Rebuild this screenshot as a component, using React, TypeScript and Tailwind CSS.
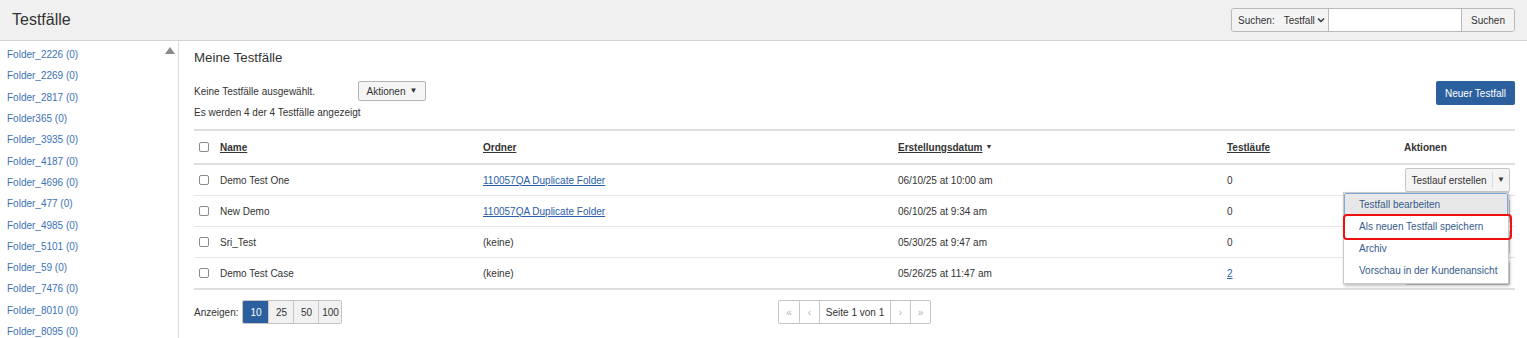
import React from "react";

const folders = [
  "Folder_2226 (0)",
  "Folder_2269 (0)",
  "Folder_2817 (0)",
  "Folder365 (0)",
  "Folder_3935 (0)",
  "Folder_4187 (0)",
  "Folder_4696 (0)",
  "Folder_477 (0)",
  "Folder_4985 (0)",
  "Folder_5101 (0)",
  "Folder_59 (0)",
  "Folder_7476 (0)",
  "Folder_8010 (0)",
  "Folder_8095 (0)",
];

type Row = { name: string; folder: string | null; date: string; runs: string; runsLink?: boolean };

const rows: Row[] = [
  { name: "Demo Test One", folder: "110057QA Duplicate Folder", date: "06/10/25 at 10:00 am", runs: "0" },
  { name: "New Demo", folder: "110057QA Duplicate Folder", date: "06/10/25 at 9:34 am", runs: "0" },
  { name: "Sri_Test", folder: null, date: "05/30/25 at 9:47 am", runs: "0" },
  { name: "Demo Test Case", folder: null, date: "05/26/25 at 11:47 am", runs: "2", runsLink: true },
];

function Checkbox() {
  return <span className="block w-[10px] h-[10px] border border-[#8a8a8a] rounded-[2px] bg-white" />;
}

function SplitButton() {
  return (
    <div className="flex h-[24px] w-[105px] border border-[#c6c6c6] rounded-[2px] bg-[#f4f4f4] text-[#333]">
      <div className="flex-1 flex items-center justify-center">Testlauf erstellen</div>
      <div className="w-[17px] flex items-center justify-center border-l border-[#dcdcdc] text-[8px] my-[3px]">▼</div>
    </div>
  );
}

function Menu() {
  return (
    <div className="absolute left-[-55px] top-[24px] w-[166px] h-[92px] bg-white border border-[#c9c9c9] shadow-[1px_2px_3px_rgba(0,0,0,0.25)] z-10 text-[#355b8c]">
      <div className="h-[22px] flex items-center pl-[14px] bg-[#e8e8e8] border border-[#7ea8d8] rounded-t-[2px]">Testfall bearbeiten</div>
      <div className="h-[22px] flex items-center pl-[15px]">Als neuen Testfall speichern</div>
      <div className="h-[22px] flex items-center pl-[15px]">Archiv</div>
      <div className="h-[22px] flex items-center pl-[15px]">Vorschau in der Kundenansicht</div>
      <div className="absolute left-[-1px] right-[-4px] top-[21px] h-[26px] border-2 border-[#ee1111] rounded-[4px]" />
    </div>
  );
}

export default function App() {
  return (
    <div className="w-[1527px] h-[338px] overflow-hidden bg-white flex flex-col font-['Liberation_Sans',Arial,sans-serif] text-[10px] text-[#333]">
      {/* Header */}
      <div className="h-[41px] shrink-0 bg-[#f0f0f0] border-b border-[#d4d4d4] flex items-center justify-between pl-[12px] pr-[12px]">
        <div className="text-[16px] text-[#333] leading-none">Testfälle</div>
        <div className="flex h-[24px] border border-[#b9b9b9] rounded-[3px] overflow-hidden">
          <div className="w-[96px] bg-[#f3f3f3] flex items-center pl-[6px] text-[#333]">
            <span>Suchen:</span>
            <span className="ml-[9px]">Testfall</span>
            <svg width="8" height="6" viewBox="0 0 8 6" className="ml-[2px]">
              <path d="M1 1.5 L4 4.5 L7 1.5" stroke="#333" strokeWidth="1.4" fill="none" />
            </svg>
          </div>
          <div className="w-[134px] bg-white border-l border-r border-[#b9b9b9]" />
          <div className="w-[52px] bg-[#f3f3f3] flex items-center justify-center">Suchen</div>
        </div>
      </div>

      {/* Body */}
      <div className="flex flex-1 min-h-0">
        {/* Sidebar */}
        <div className="w-[179px] shrink-0 border-r border-[#dcdcdc] flex">
          <div className="flex-1 pt-[3px] pl-[7px]">
            {folders.map((f) => (
              <div key={f} className="h-[21.3px] flex items-center text-[#3b72b6]">
                {f}
              </div>
            ))}
          </div>
          <div className="w-[16px] flex justify-center pt-[6px]">
            <svg width="10" height="7" viewBox="0 0 10 7">
              <path d="M0 7 L5 0 L10 7 Z" fill="#8a8a8a" />
            </svg>
          </div>
        </div>

        {/* Main */}
        <div className="flex-1 pl-[15px] pr-[12px] flex flex-col">
          <div className="mt-[9px] h-[16px] text-[13.3px] leading-[16px] text-[#333]">Meine Testfälle</div>

          <div className="mt-[15px] flex justify-between items-start">
            <div className="flex flex-col">
              <div className="flex items-center h-[20px]">
                <span className="w-[164px]">Keine Testfälle ausgewählt.</span>
                <div className="h-[20px] w-[68px] border border-[#b5b5b5] rounded-[2px] bg-[#f5f5f5] flex items-center justify-center gap-[4px]">
                  <span>Aktionen</span>
                  <span className="text-[8px]">▼</span>
                </div>
              </div>
              <div className="mt-[5px] h-[14px] leading-[14px]">Es werden 4 der 4 Testfälle angezeigt</div>
            </div>
            <div className="h-[24px] w-[79px] bg-[#2c5f9e] rounded-[2px] text-white flex items-center justify-center">
              Neuer Testfall
            </div>
          </div>

          {/* Table */}
          <div className="mt-[9px]">
            <div className="flex h-[36px] border-t-2 border-b-2 border-[#dedede] items-center font-bold">
              <div className="w-[20px] pl-[5px] flex items-center"><Checkbox /></div>
              <div className="w-[263px] pl-[6px] underline">Name</div>
              <div className="w-[415px] pl-[6px] underline">Ordner</div>
              <div className="w-[329px] pl-[6px] flex items-center gap-[3px]">
                <span className="underline">Erstellungsdatum</span>
                <span className="text-[7px]">▼</span>
              </div>
              <div className="w-[177px] pl-[6px] underline">Testläufe</div>
              <div className="flex-1 pl-[6px]">Aktionen</div>
            </div>
            {rows.map((r, i) => (
              <div
                key={r.name}
                className={`flex items-center ${i === rows.length - 1 ? "h-[32px] border-b-2 border-[#dedede]" : "h-[31px] border-b border-[#e6e6e6]"}`}
              >
                <div className="w-[20px] pl-[5px] flex items-center"><Checkbox /></div>
                <div className="w-[263px] pl-[6px]">{r.name}</div>
                <div className="w-[415px] pl-[6px]">
                  {r.folder ? <span className="text-[#2b5ea8] underline">{r.folder}</span> : "(keine)"}
                </div>
                <div className="w-[329px] pl-[6px]">{r.date}</div>
                <div className="w-[177px] pl-[6px]">
                  {r.runsLink ? <span className="text-[#2b5ea8] underline">{r.runs}</span> : r.runs}
                </div>
                <div className="flex-1 pl-[7px] relative">
                  <SplitButton />
                  {i === 0 && <Menu />}
                </div>
              </div>
            ))}
          </div>

          {/* Footer */}
          <div className="mt-[10px] flex items-center h-[24px]">
            <div className="flex-1 flex items-center">
              <span className="mr-[4px]">Anzeigen:</span>
              <div className="flex h-[24px] border border-[#c4c4c4] rounded-[2px] overflow-hidden">
                <div className="w-[25px] bg-[#2c5f9e] text-white flex items-center justify-center">10</div>
                <div className="w-[25px] bg-[#f1f1f1] border-l border-[#c9c9c9] flex items-center justify-center">25</div>
                <div className="w-[25px] bg-[#f1f1f1] border-l border-[#c9c9c9] flex items-center justify-center">50</div>
                <div className="w-[23px] bg-[#f1f1f1] border-l border-[#c9c9c9] flex items-center justify-center">100</div>
              </div>
            </div>
            <div className="flex h-[24px] border border-[#c4c4c4] rounded-[2px] overflow-hidden bg-white">
              <div className="w-[20px] flex items-center justify-center text-[#a9b4c2]">«</div>
              <div className="w-[20px] border-l border-[#c9c9c9] flex items-center justify-center text-[#a9b4c2]">‹</div>
              <div className="w-[71px] border-l border-[#c9c9c9] flex items-center justify-center">Seite 1 von 1</div>
              <div className="w-[20px] border-l border-[#c9c9c9] flex items-center justify-center text-[#a9b4c2]">›</div>
              <div className="w-[20px] border-l border-[#c9c9c9] flex items-center justify-center text-[#a9b4c2]">»</div>
            </div>
            <div className="flex-1" />
          </div>
        </div>
      </div>
    </div>
  );
}
